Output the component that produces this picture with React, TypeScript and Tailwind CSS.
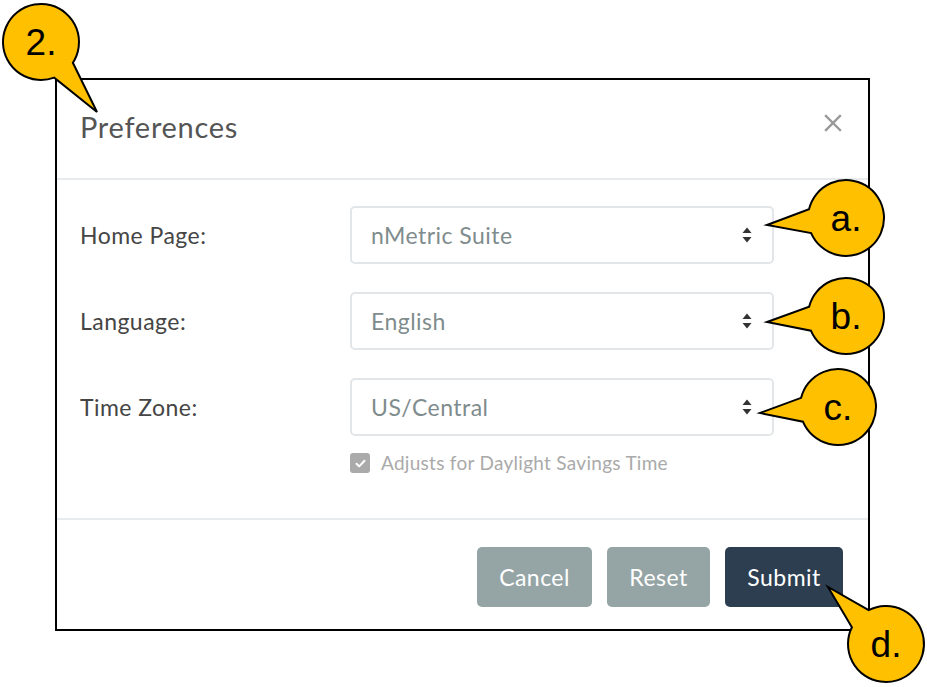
import React from 'react';

// ─── Callout bubble (circle + wedge tail) ───
function calloutPath(cx: number, cy: number, r: number, tx: number, ty: number, d = 0.32) {
    const phi = Math.atan2(ty - cy, tx - cx);
    const p1x = cx + r * Math.cos(phi - d);
    const p1y = cy + r * Math.sin(phi - d);
    const p2x = cx + r * Math.cos(phi + d);
    const p2y = cy + r * Math.sin(phi + d);
    return `M ${p2x} ${p2y} A ${r} ${r} 0 1 1 ${p1x} ${p1y} L ${tx} ${ty} Z`;
}

const callouts = [
    { label: '2.', cx: 41, cy: 42, tx: 97, ty: 112 },
    { label: 'a.', cx: 846, cy: 218, tx: 767, ty: 225 },
    { label: 'b.', cx: 846, cy: 316, tx: 767, ty: 322 },
    { label: 'c.', cx: 838, cy: 407, tx: 760, ty: 413 },
    { label: 'd.', cx: 886, cy: 644, tx: 828, ty: 587 },
];

function Callouts() {
    return (
        <svg className="absolute inset-0 pointer-events-none" width={927} height={687}>
            {callouts.map(c => (
                <g key={c.label}>
                    <path
                        d={calloutPath(c.cx, c.cy, 38, c.tx, c.ty)}
                        fill="#ffc000"
                        stroke="#000"
                        strokeWidth={2}
                        strokeLinejoin="miter"
                    />
                    <text
                        x={c.cx}
                        y={c.cy + 13}
                        textAnchor="middle"
                        fontFamily="'Liberation Sans', Arial, sans-serif"
                        fontSize={37}
                        fill="#000"
                    >
                        {c.label}
                    </text>
                </g>
            ))}
        </svg>
    );
}

function SortArrows() {
    return (
        <svg width="10" height="16" viewBox="0 0 10 16" className="shrink-0">
            <path d="M5 0.5 L9.5 6 L0.5 6 Z" fill="#333" />
            <path d="M5 15.5 L9.5 10 L0.5 10 Z" fill="#333" />
        </svg>
    );
}

function SelectRow({ label, value }: { label: string; value: string }) {
    return (
        <div className="flex items-center">
            <span className="w-[270px] text-[23px] tracking-[0.02em] text-[#454545]">{label}</span>
            <div className="flex h-[58px] w-[424px] items-center justify-between rounded-[5px] border-2 border-[#e3e6e9] pl-[19px] pr-[20px]">
                <span className="text-[23px] tracking-[0.02em] text-[#7f8c8d]">{value}</span>
                <SortArrows />
            </div>
        </div>
    );
}

export default function App() {
    return (
        <div className="relative h-[687px] w-[927px] bg-white" style={{ fontFamily: 'Lato, "Open Sans", sans-serif' }}>
            <div className="pl-[55px] pt-[78px]">
                <div className="flex h-[553px] w-[815px] flex-col border-2 border-black bg-white">
                    {/* Header */}
                    <div className="flex h-[100px] items-center justify-between border-b-2 border-[#e8ebee] pl-[23px] pr-[26px]">
                        <span className="-mt-[4px] text-[29px] tracking-[0.025em] text-[#555]">Preferences</span>
                        <svg width="18" height="18" viewBox="0 0 18 18" className="-mt-[12px]">
                            <path d="M2 2 L16 16 M16 2 L2 16" stroke="#999" strokeWidth="2.4" strokeLinecap="square" />
                        </svg>
                    </div>

                    {/* Body */}
                    <div className="flex flex-1 flex-col gap-[28px] border-b-2 border-[#e8ebee] pl-[23px] pt-[26px]">
                        <SelectRow label="Home Page:" value="nMetric Suite" />
                        <SelectRow label="Language:" value="English" />
                        <div className="flex flex-col">
                            <SelectRow label="Time Zone:" value="US/Central" />
                            <div className="mt-[13px] flex items-center gap-[11px] pl-[270px]">
                                <div className="flex h-[20px] w-[20px] items-center justify-center rounded-[3px] bg-[#aaaaaa]">
                                    <svg width="13" height="13" viewBox="0 0 13 13">
                                        <path d="M2.5 6.8 L5.2 9.4 L10.5 3.8" fill="none" stroke="#fff" strokeWidth="2" strokeLinecap="round" strokeLinejoin="round" />
                                    </svg>
                                </div>
                                <span className="text-[19px] tracking-[0.015em] text-[#aaaaaa]">Adjusts for Daylight Savings Time</span>
                            </div>
                        </div>
                    </div>

                    {/* Footer */}
                    <div className="flex h-[109px] items-start justify-end gap-[15px] pr-[25px] pt-[27px]">
                        <button className="h-[60px] w-[115px] rounded-[5px] bg-[#95a5a6] text-[23px] tracking-[0.02em] text-white">Cancel</button>
                        <button className="h-[60px] w-[103px] rounded-[5px] bg-[#95a5a6] text-[23px] tracking-[0.02em] text-white">Reset</button>
                        <button className="h-[60px] w-[118px] rounded-[5px] bg-[#2c3e50] text-[23px] tracking-[0.02em] text-white">Submit</button>
                    </div>
                </div>
            </div>
            <Callouts />
        </div>
    );
}
